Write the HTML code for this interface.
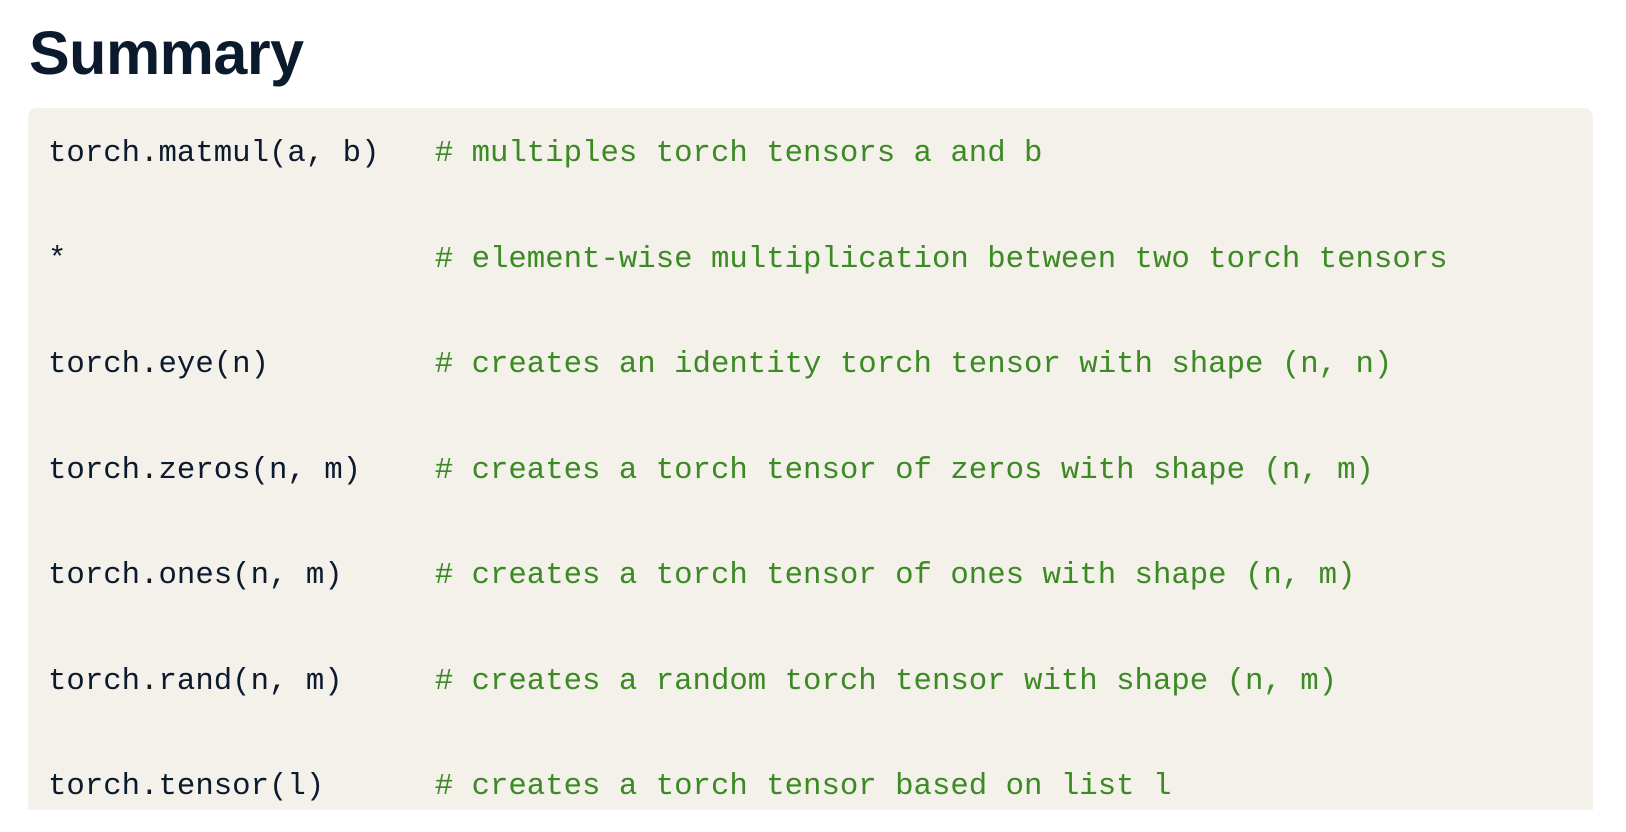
<!DOCTYPE html>
<html><head><meta charset="utf-8"><style>
html,body{margin:0;padding:0;background:#fff;width:1626px;height:832px;overflow:hidden;position:relative}
h1{position:absolute;left:29px;top:0;margin:0;font-family:"Liberation Sans",sans-serif;font-weight:bold;font-size:61px;line-height:106px;color:#0b1a2c;letter-spacing:-0.5px}
.box{position:absolute;left:28px;top:108px;width:1565px;height:702px;background:#f4f1eb;border-radius:9px 9px 0 0}
pre{position:absolute;left:48px;top:101px;margin:0;font-family:"Liberation Mono",monospace;font-size:30.7px;line-height:105.5px;color:#0b1a2c}
.c{color:#3b8a23}
</style></head><body>
<h1>Summary</h1>
<div class="box"></div>
<pre>torch.matmul(a, b)   <span class="c"># multiples torch tensors a and b</span>
*                    <span class="c"># element-wise multiplication between two torch tensors</span>
torch.eye(n)         <span class="c"># creates an identity torch tensor with shape (n, n)</span>
torch.zeros(n, m)    <span class="c"># creates a torch tensor of zeros with shape (n, m)</span>
torch.ones(n, m)     <span class="c"># creates a torch tensor of ones with shape (n, m)</span>
torch.rand(n, m)     <span class="c"># creates a random torch tensor with shape (n, m)</span>
torch.tensor(l)      <span class="c"># creates a torch tensor based on list l</span></pre>
</body></html>
